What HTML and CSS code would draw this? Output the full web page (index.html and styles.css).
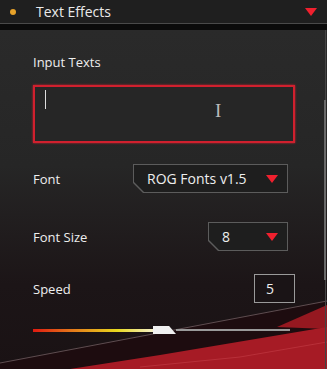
FILE: index.html
```html
<!DOCTYPE html>
<html lang="en">
<head>
    <meta charset="UTF-8">
    <meta name="viewport" content="width=device-width, initial-scale=1.0">
    <title>Text Effects</title>
    <link rel="stylesheet" href="styles.css">
</head>
<body>
    <div class="header">
        <span class="dot"></span>
        <span class="header-title">Text Effects</span>
        <span class="tri header-tri"></span>
    </div>
    <div class="gap-band"></div>

    <div class="panel">
        <!-- decorative background stripes -->
        <svg class="deco" viewBox="0 0 327 339">
            <polygon points="0,333 327,271 327,339 0,339" fill="#1d0c0f"/>
            <polygon points="327,275 277,297 327,299" fill="#951820"/>
            <polygon points="70,339 160,325 327,297 327,339" fill="#a61b25"/>
            <polyline points="140,337 240,327 327,312" stroke="#b83039" stroke-width="1" fill="none"/>
            <polyline points="0,333 327,271" stroke="#5e4d50" stroke-width="1" fill="none"/>
        </svg>
        <div class="scroll-track"><div class="scroll-thumb"></div></div>

        <div class="content">
            <div class="label">Input Texts</div>
            <div class="text-input">
                <span class="caret"></span>
                <span class="ibeam">I</span>
            </div>

            <div class="row row-font">
                <span class="label">Font</span>
                <div class="select select-wide">
                    <span>ROG Fonts v1.5</span>
                    <span class="tri"></span>
                </div>
            </div>

            <div class="row row-size">
                <span class="label">Font Size</span>
                <div class="select select-small">
                    <span>8</span>
                    <span class="tri"></span>
                </div>
            </div>

            <div class="row row-speed">
                <span class="label">Speed</span>
                <div class="num-box">5</div>
            </div>

            <div class="slider">
                <div class="slider-fill" style="width: 120px"></div>
                <div class="slider-thumb"></div>
                <div class="slider-rest"></div>
            </div>
        </div>
    </div>
</body>
</html>
```

FILE: styles.css
```css
body {
    margin: 0;
    width: 327px;
    height: 369px;
    overflow: hidden;
    background-color: #1a1a1a;
    color: #eee;
    font-family: "Open Sans", "Noto Sans", sans-serif;
}
.header {
    height: 23px;
    display: flex;
    align-items: center;
    background-color: #1f1f1f;
    border-bottom: 1px solid #4a4a4a;
}
.dot {
    width: 6px;
    height: 6px;
    border-radius: 50%;
    background-color: #e7a22a;
    margin-left: 10px;
}
.header-title {
    margin-left: 20px;
    font-size: 14px;
    color: #eaeaea;
    flex: 1;
}
.tri {
    width: 0;
    height: 0;
    border-left: 6px solid transparent;
    border-right: 6px solid transparent;
    border-top: 8px solid #f0202e;
}
.header-tri {
    margin-right: 10px;
}
.gap-band {
    height: 6px;
    background-color: #0b0b0b;
}
.panel {
    position: relative;
    height: 339px;
    background: linear-gradient(#2a2a2a 0%, #262626 40%, #1c1517 75%, #1a1214 100%);
    overflow: hidden;
}
.deco {
    position: absolute;
    left: 0;
    top: 0;
    width: 327px;
    height: 339px;
}
.scroll-track {
    position: absolute;
    right: 1px;
    top: 0;
    width: 1px;
    height: 339px;
    background-color: #444;
}
.scroll-thumb {
    margin-top: 70px;
    height: 180px;
    width: 2px;
    margin-left: -1px;
    background-color: #6a6a6a;
}
.content {
    position: relative;
    padding: 23px 0 0 33px;
    width: 262px;
}
.label {
    font-size: 13px;
    color: #eee;
}
.text-input {
    position: relative;
    margin-top: 14px;
    height: 54px;
    border: 2px solid #d0202e;
    box-shadow: 0 0 2px #d0202e;
    background-color: #262626;
}
.caret {
    position: absolute;
    left: 10px;
    top: 3px;
    width: 1px;
    height: 19px;
    background-color: #ddd;
}
.ibeam {
    position: absolute;
    left: 180px;
    top: 14px;
    font-family: "Liberation Serif", serif;
    font-size: 19px;
    color: #bbb;
    line-height: 1;
}
.row {
    display: flex;
    align-items: center;
    justify-content: space-between;
    height: 29px;
}
.row-font {
    margin-top: 21px;
    width: 255px;
}
.row-size {
    margin-top: 29px;
    width: 255px;
}
.row-speed {
    margin-top: 23px;
}
.select {
    height: 29px;
    box-sizing: border-box;
    display: flex;
    align-items: center;
    justify-content: space-between;
    padding: 0 10px 0 14px;
    font-size: 14px;
    color: #eee;
    background-color: #5c5c5c;
    clip-path: polygon(0 0, 100% 0, 100% 100%, 10px 100%, 0 calc(100% - 10px));
    position: relative;
}
.select::before {
    content: "";
    position: absolute;
    inset: 1px;
    background-color: #1e1e1e;
    clip-path: polygon(0 0, 100% 0, 100% 100%, 10px 100%, 0 calc(100% - 10px));
    z-index: 0;
}
.select span {
    position: relative;
}
.select-wide {
    width: 155px;
}
.select-small {
    width: 80px;
}
.num-box {
    width: 41px;
    height: 29px;
    box-sizing: border-box;
    border: 1px solid #9a9a9a;
    padding-left: 11px;
    display: flex;
    align-items: center;
    font-size: 14px;
    background-color: #1a1416;
}
.slider {
    display: flex;
    align-items: center;
    margin-top: 22px;
    width: 257px;
    height: 10px;
}
.slider-fill {
    height: 3px;
    background: linear-gradient(to right, #e01a10, #e4721a 30%, #e8d81e 70%, #f4f0c8);
}
.slider-thumb {
    width: 23px;
    height: 8px;
    background-color: #f0f0f0;
    clip-path: polygon(0 0, 70% 0, 100% 100%, 0 100%);
}
.slider-rest {
    flex: 1;
    height: 2px;
    background-color: #9a9a9a;
}
```
